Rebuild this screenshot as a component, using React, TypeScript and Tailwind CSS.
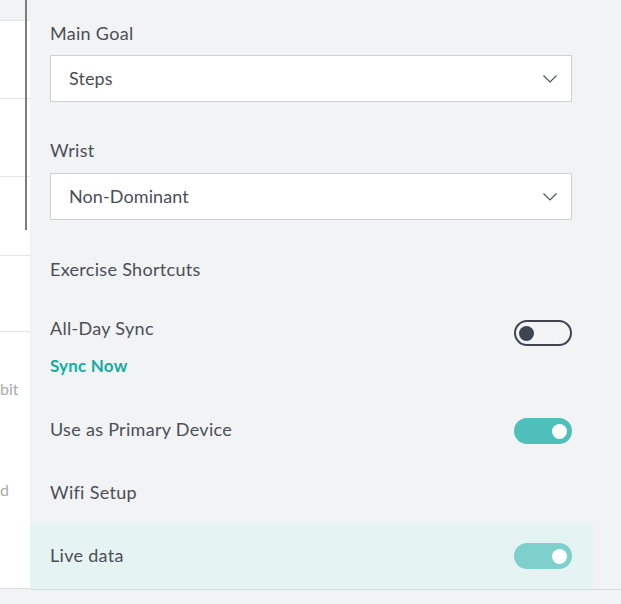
import React from "react";

const font = { fontFamily: "Lato, 'Open Sans', sans-serif" };

function Chevron() {
  return (
    <svg width="14" height="8" viewBox="0 0 14 8" className="shrink-0">
      <path d="M0.5 0.5 L7 7 L13.5 0.5" fill="none" stroke="#4a4f57" strokeWidth="1.1" />
    </svg>
  );
}

function Select({ value }: { value: string }) {
  return (
    <div className="flex h-[47px] items-center justify-between border border-[#cfd0d2] bg-white pl-[18px] pr-[14px]">
      <span className="pb-[2px] text-[18px] leading-[22px] tracking-[0.1px] text-[#4a4f57]">{value}</span>
      <Chevron />
    </div>
  );
}

function Toggle({ on, light }: { on: boolean; light?: boolean }) {
  if (!on) {
    return (
      <div className="flex h-[26px] w-[58px] shrink-0 items-center rounded-full border-2 border-[#3e4550] pl-[3px]">
        <div className="h-[15px] w-[15px] rounded-full bg-[#3e4550]" />
      </div>
    );
  }
  return (
    <div
      className={
        "flex h-[26px] w-[58px] shrink-0 items-center justify-end rounded-full pr-[5px] " +
        (light ? "bg-[#7ed0cd]" : "bg-[#4fbfbc]")
      }
    >
      <div className="h-[15px] w-[15px] rounded-full bg-white" />
    </div>
  );
}

export default function App() {
  return (
    <div className="relative flex h-[604px] w-[621px] overflow-hidden bg-[#f2f3f5]" style={font}>
      {/* left strip */}
      <div className="flex w-[30px] shrink-0 flex-col overflow-hidden">
        <div className="h-[21px] border-b border-[#e3e4e6] bg-[#f2f3f5]" />
        <div className="h-[78px] border-b border-[#e3e4e6] bg-white" />
        <div className="h-[78px] border-b border-[#e3e4e6] bg-white" />
        <div className="h-[79px] border-b border-[#e3e4e6] bg-white" />
        <div className="h-[76px] border-b border-[#e3e4e6] bg-white" />
        <div className="flex h-[257px] flex-col items-start border-b border-[#d9dadc] bg-white text-[16px] text-[#a9abae]">
          <div className="mt-[45px] whitespace-nowrap leading-[24px]">bit</div>
          <div className="mt-[77px] whitespace-nowrap leading-[24px]">d</div>
        </div>
      </div>
      {/* scrollbar overlay */}
      <div className="absolute left-[25px] top-0 h-[230px] w-[2px] bg-[#7d7d7d]" />

      {/* main */}
      <div className="flex flex-1 flex-col">
        <div className="flex h-[590px] w-[563px] flex-col border-b border-[#d9dadc] text-[18px] tracking-[0.3px] text-[#4a4f57]">
          <div className="px-[20px] pr-[21px]">
            <div className="mt-[22px] pb-[2px] leading-[22px]">Main Goal</div>
            <div className="mt-[9px]">
              <Select value="Steps" />
            </div>
            <div className="mt-[37px] pb-[2px] leading-[22px]">Wrist</div>
            <div className="mt-[10px]">
              <Select value="Non-Dominant" />
            </div>
            <div className="mt-[38px] pb-[2px] leading-[22px]">Exercise Shortcuts</div>
            <div className="mt-[35px] flex items-start justify-between">
              <span className="pb-[2px] leading-[22px]">All-Day Sync</span>
              <div className="mt-[3px]">
                <Toggle on={false} />
              </div>
            </div>
            <div className="mt-[9px] pb-[2px] text-[17px] font-bold leading-[22px] tracking-[0.2px] text-[#14aca3]">
              Sync Now
            </div>
            <div className="mt-[39px] flex h-[26px] items-center justify-between">
              <span className="pb-[4px] leading-[22px]">Use as Primary Device</span>
              <Toggle on />
            </div>
            <div className="mt-[37px] pb-[2px] leading-[22px]">Wifi Setup</div>
          </div>
          <div className="mt-[18px] flex h-[66px] items-center justify-between bg-[#e5f3f3] pl-[20px] pr-[21px]">
            <span className="pb-[3px] leading-[22px]">Live data</span>
            <Toggle on light />
          </div>
        </div>
      </div>
      <div className="absolute left-[563px] top-[589px] h-px w-[58px] bg-[#d9dadc]" />
    </div>
  );
}
